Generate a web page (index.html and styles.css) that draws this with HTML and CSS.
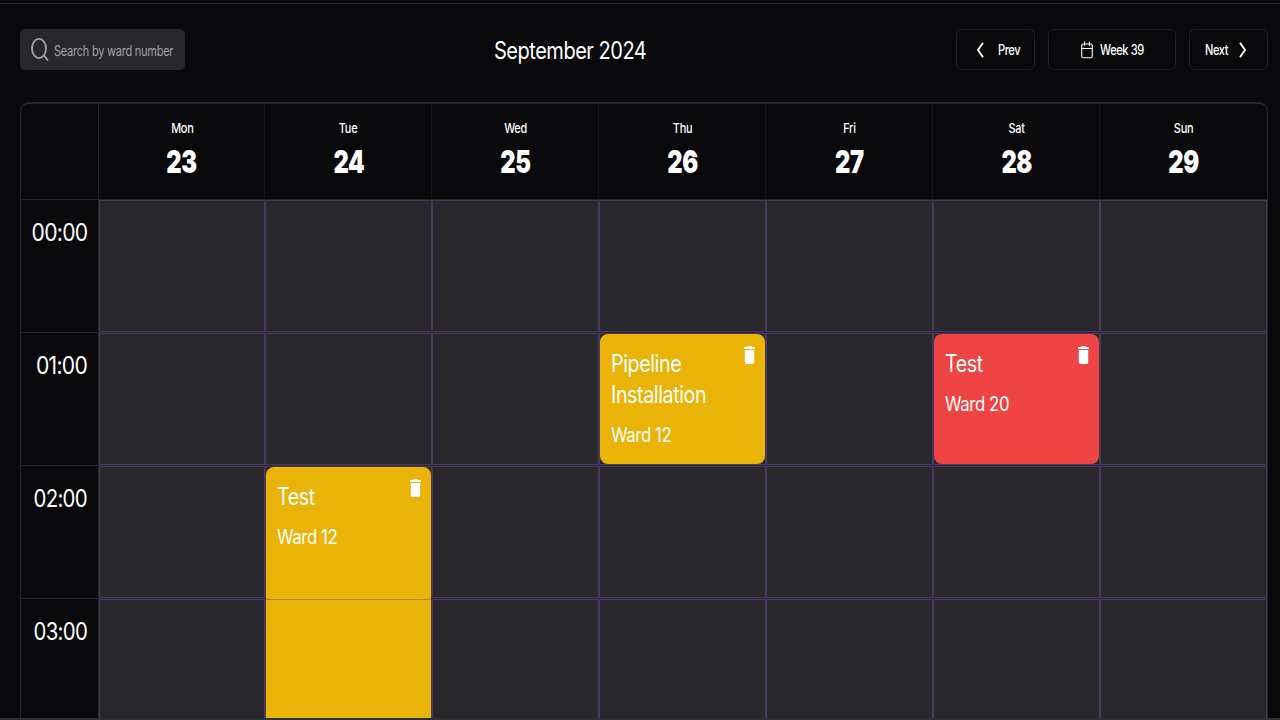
FILE: index.html
```html
<!DOCTYPE html>
<html lang="en">
<head>
<meta charset="utf-8">
<title>Schedule</title>
<link rel="stylesheet" href="styles.css">
</head>
<body>
<div class="page">
  <header class="toolbar">
    <label class="search">
      <svg class="search-icon" width="18" height="24" viewBox="0 0 18 24"><ellipse cx="8" cy="10.5" rx="7" ry="9.6"/><path d="M13 17.5 16.5 22"/></svg>
      <span class="t search-text">Search by ward number</span>
    </label>
    <h1 class="title"><span class="t">September 2024</span></h1>
    <nav class="nav">
      <button class="btn prev"><svg width="8" height="16" viewBox="0 0 8 16"><path class="chev" d="M7 .8 2 8 7 15.2"/></svg><span class="t">Prev</span></button>
      <button class="btn week"><svg width="12" height="18" viewBox="0 0 12 18"><path class="cal" d="M2 3H10Q11.3 3 11.3 4.6V15.2Q11.3 16.8 10 16.8H2Q.7 16.8 .7 15.2V4.6Q.7 3 2 3ZM.7 7.5H11.3M3.5 .5V4.8M8.5 .5V4.8"/></svg><span class="t">Week 39</span></button>
      <button class="btn next"><span class="t">Next</span><svg width="8" height="16" viewBox="0 0 8 16"><path class="chev" d="M1 .8 6 8 1 15.2"/></svg></button>
    </nav>
  </header>
  <main class="calendar">
    <div class="corner"></div>
    <div class="day"><span class="t name">Mon</span><b class="t">23</b></div>
    <div class="day"><span class="t name">Tue</span><b class="t">24</b></div>
    <div class="day"><span class="t name">Wed</span><b class="t">25</b></div>
    <div class="day"><span class="t name">Thu</span><b class="t">26</b></div>
    <div class="day"><span class="t name">Fri</span><b class="t">27</b></div>
    <div class="day"><span class="t name">Sat</span><b class="t">28</b></div>
    <div class="day"><span class="t name">Sun</span><b class="t">29</b></div>

    <div class="time"><span class="t">00:00</span></div>
    <div class="cell"></div><div class="cell"></div><div class="cell"></div><div class="cell"></div><div class="cell"></div><div class="cell"></div><div class="cell"></div>

    <div class="time"><span class="t">01:00</span></div>
    <div class="cell"></div><div class="cell"></div><div class="cell"></div>
    <div class="cell"><article class="event yellow"><h2><span class="t">Pipeline<br>Installation</span></h2><p><span class="t">Ward 12</span></p><svg class="trash" width="11" height="18" viewBox="0 0 11 18"><path d="M0 1H3L3.6 0H7.4L8 1H11V3H0ZM.8 4H10.2V16Q10.2 18 8.7 18H2.3Q.8 18 .8 16Z"/></svg></article></div>
    <div class="cell"></div>
    <div class="cell"><article class="event red"><h2><span class="t">Test</span></h2><p><span class="t">Ward 20</span></p><svg class="trash" width="11" height="18" viewBox="0 0 11 18"><path d="M0 1H3L3.6 0H7.4L8 1H11V3H0ZM.8 4H10.2V16Q10.2 18 8.7 18H2.3Q.8 18 .8 16Z"/></svg></article></div>
    <div class="cell"></div>

    <div class="time narrow"><span class="t">02:00</span></div>
    <div class="cell"></div>
    <div class="cell"><article class="event yellow long"><h2><span class="t">Test</span></h2><p><span class="t">Ward 12</span></p><svg class="trash" width="11" height="18" viewBox="0 0 11 18"><path d="M0 1H3L3.6 0H7.4L8 1H11V3H0ZM.8 4H10.2V16Q10.2 18 8.7 18H2.3Q.8 18 .8 16Z"/></svg></article></div>
    <div class="cell"></div><div class="cell"></div><div class="cell"></div><div class="cell"></div><div class="cell"></div>

    <div class="time narrow"><span class="t">03:00</span></div>
    <div class="cell"></div><div class="cell covered"></div><div class="cell"></div><div class="cell"></div><div class="cell"></div><div class="cell"></div><div class="cell"></div>
  </main>
  <div class="bottom-edge"></div>
</div>
</body>
</html>
```
FILE: styles.css
```css
* { box-sizing: border-box; }
body { margin: 0; background: #09090b; color: #fff; font-family: Inter, "Liberation Sans", sans-serif; }
.page { position: relative; height: 720px; overflow: hidden; border-top: 3px solid #09090b; }
.page::before { content: ""; display: block; height: 1px; background: #27272a; }
.t { display: inline-block; white-space: nowrap; transform-origin: 0 50%; }
.toolbar { height: 98px; padding: 25px 12px 0 20px; display: grid; grid-template-columns: 165px 1fr 312px; align-items: start; }
.search { height: 41px; background: #27272a; border-radius: 5px; display: flex; align-items: center; padding-left: 11px; }
.search-icon { fill: none; stroke: #a1a1aa; stroke-width: 1.8; stroke-linecap: round; flex: none; }
.search-text { font-size: 14px; color: #a1a1aa; letter-spacing: -.3px; margin: 1px 0 0 5px; transform: scaleX(.785); }
.title { margin: 5px 0 0 309px; font-size: 24px; line-height: 34px; font-weight: 400; }
.title .t { letter-spacing: -.6px; transform: scaleX(.835); }
.nav { display: flex; justify-content: space-between; }
.btn { height: 41px; padding: 0; border: 1px solid #222225; border-radius: 6px; background: none; color: #fff; font: 500 14px/20px Inter, sans-serif; display: flex; align-items: center; }
.btn svg { fill: none; flex: none; }
.chev { stroke: #fff; stroke-width: 1.9; }
.cal { stroke: #fff; stroke-width: 1.1; }
.btn .t { letter-spacing: -.5px; transform: scaleX(.79); }
.prev { width: 79px; padding-left: 19px; gap: 14px; }
.week { width: 128px; padding-left: 32px; gap: 7px; }
.next { width: 79px; padding-left: 13px; }
.next .t { width: 37px; margin-left: -1px; }
.calendar { margin: 0 12px 0 20px; height: 618px; border: 1px solid #27272a; border-top-width: 2px; border-bottom: 0; border-radius: 9px 9px 0 0; display: grid; grid-template-columns: 78px 166px repeat(6, 167px); grid-template-rows: 96px repeat(4, 133px); overflow: hidden; }
.corner, .time { border-right: 1px solid #27272a; border-bottom: 1px solid #27272a; }
.day { border-right: 1px solid #18181b; border-bottom: 1px solid #27272a; display: flex; flex-direction: column; align-items: center; padding: 14px 0 0 1px; }
.day:nth-child(8) { border-right: 0; }
.day .t { transform-origin: 50% 50%; }
.name { font-size: 13px; line-height: 20px; font-weight: 500; letter-spacing: -.3px; transform: scaleX(.84); }
.day b { font-size: 32px; line-height: 40px; margin-top: 4px; font-weight: 900; letter-spacing: -.5px; transform: scaleX(.74); }
.time { padding: 17px 11px 0 0; text-align: right; font-size: 24px; line-height: 32px; }
.time .t { letter-spacing: -.8px; transform-origin: 100% 50%; transform: scaleX(.88); }
.narrow .t { transform: scaleX(.85); }
.cell { background: #28272b; border: 1px solid #4a3860; height: 132px; position: relative; box-shadow: 0 1px #2b2636; }
.event { position: absolute; z-index: 1; left: 0; top: 0; width: 165px; height: 130px; padding: 14px 10.5px; border-radius: 8px; }
.event.long { height: 300px; }
.yellow { background: #eab308; }
.red { background: #ef4444; }
.event h2 { margin: 0; font-size: 24px; line-height: 31px; font-weight: 400; }
.event p { margin: 11px 0 0; font-size: 20px; line-height: 28px; }
.event .t { letter-spacing: -.5px; transform: scaleX(.82); }
.event p .t { transform: scaleX(.84); }
.trash { position: absolute; right: 10px; top: 11.5px; fill: #fff; }
.covered::after { content: ""; position: absolute; z-index: 2; left: 0; right: 0; top: -1px; height: 1px; background: #ab822f; }
.bottom-edge { position: absolute; left: 0; right: 0; bottom: 0; height: 2px; background: #2b3236; z-index: 3; }
```
